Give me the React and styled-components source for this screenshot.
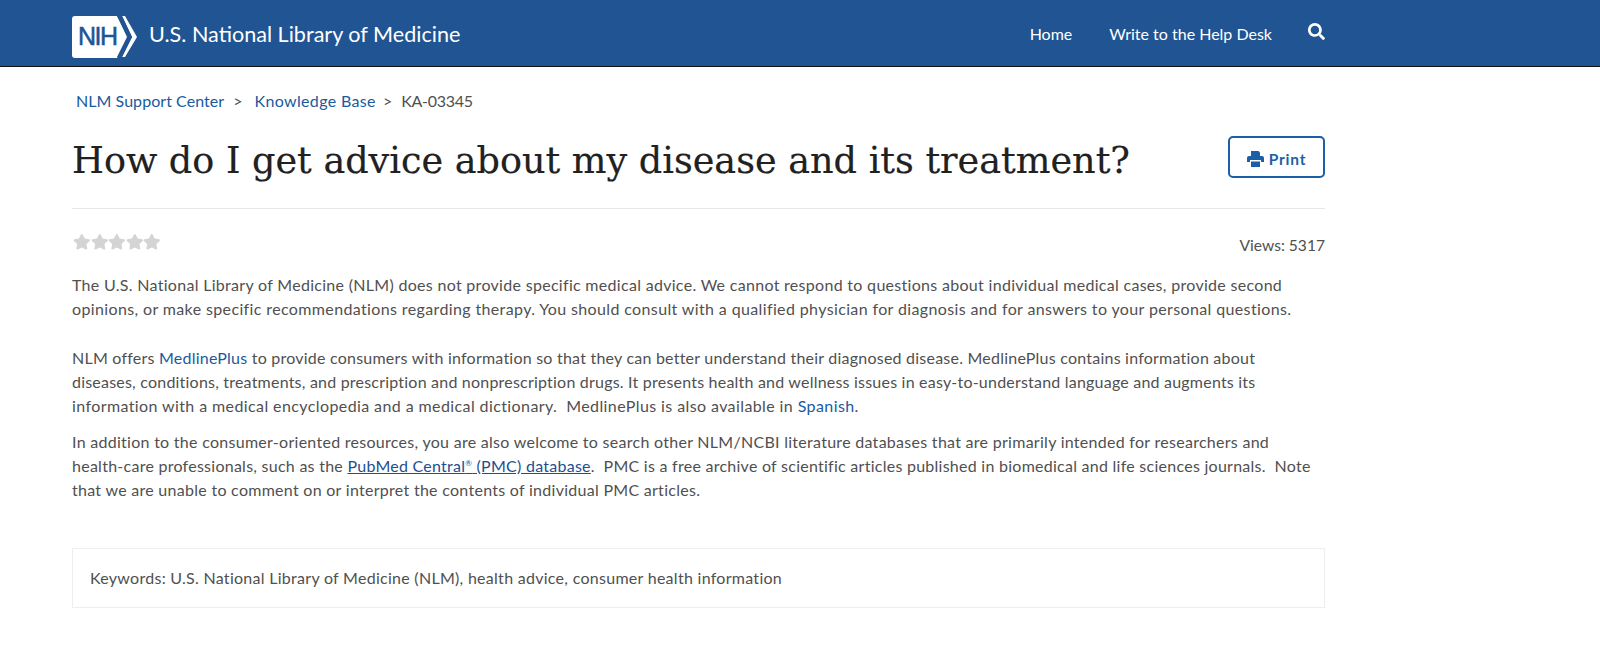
import React from "react";
import styled, { createGlobalStyle } from "styled-components";
import { FaSearch, FaStar } from "react-icons/fa";

const GlobalStyle = createGlobalStyle`
  body {
    margin: 0;
    background: #fff;
    font-family: "Lato", "Open Sans", sans-serif;
    color: #505050;
  }
`;

const NihLogo = () => (
  <svg width="66" height="42" viewBox="0 0 66 42">
    <path d="M3 0H45L57 21L45 42H3Q0 42 0 39V3Q0 0 3 0Z" fill="#fff" />
    <path d="M50 0H53L65 21L53 41H50L60 21Z" fill="#fff" />
    <path d="M45 0H50L60 21L50 41H45L55 21Z" fill="#205493" />
    <text x="6" y="29" fontFamily="Liberation Sans" fontSize="25" fill="#205493" stroke="#205493" strokeWidth="0.5" textLength="40">
      NIH
    </text>
  </svg>
);

const PrinterIcon = () => (
  <svg width="17" height="17" viewBox="0 0 17 17" fill="currentColor">
    <path d="M4 1H11.5L13 2.5V6.5H4Z" />
    <path d="M2 6H15Q17 6 17 8V12H14V10H3V12H0V8Q0 6 2 6Z" />
    <path d="M4 11.5H13V17H4Z" />
  </svg>
);

export default function App() {
  return (
    <>
      <GlobalStyle />
      <Header>
        <HeaderInner>
          <Brand>
            <LogoSlot>
              <NihLogo />
            </LogoSlot>
            <BrandName>U.S. National Library of Medicine</BrandName>
          </Brand>
          <Nav>
            <NavLink>Home</NavLink>
            <NavLink>Write to the Help Desk</NavLink>
            <SearchIcon />
          </Nav>
        </HeaderInner>
      </Header>
      <Main>
        <Crumbs>
          <Link>NLM Support Center</Link>
          <Sep>&gt;</Sep>
          <Line $track={0.35}>
            <Link>Knowledge Base</Link>
          </Line>
          <Sep $tight>&gt;</Sep>
          <Line $track={-0.3}>KA-03345</Line>
        </Crumbs>
        <TitleRow>
          <Title>How do I get advice about my disease and its treatment?</Title>
          <PrintButton>
            <PrinterIcon />
            <PrintLabel>Print</PrintLabel>
          </PrintButton>
        </TitleRow>
        <MetaRow>
          <Stars>
            {[0, 1, 2, 3, 4].map((i) => (
              <FaStar key={i} size={17.6} />
            ))}
          </Stars>
          <Views>Views: 5317</Views>
        </MetaRow>
        <Para $gap={25}>
          <Line $track={0.3}>The U.S. National Library of Medicine (NLM) does not provide specific medical advice. We cannot respond to questions about individual medical cases, provide second</Line>
          <Line $track={0.37}>opinions, or make specific recommendations regarding therapy. You should consult with a qualified physician for diagnosis and for answers to your personal questions.</Line>
        </Para>
        <Para $gap={12}>
          <Line $track={0.225}>NLM offers <Link>MedlinePlus</Link> to provide consumers with information so that they can better understand their diagnosed disease. MedlinePlus contains information about</Line>
          <Line $track={0.21}>diseases, conditions, treatments, and prescription and nonprescription drugs. It presents health and wellness issues in easy-to-understand language and augments its</Line>
          <Line $track={0.4}>information with a medical encyclopedia and a medical dictionary. &nbsp;MedlinePlus is also available in <Link>Spanish</Link>.</Line>
        </Para>
        <Para $gap={46}>
          <Line $track={0.28}>In addition to the consumer-oriented resources, you are also welcome to search other NLM/NCBI literature databases that are primarily intended for researchers and</Line>
          <Line $track={0.26}>health-care professionals, such as the <Underlined>PubMed Central<Reg>®</Reg> (PMC) database</Underlined>. &nbsp;PMC is a free archive of scientific articles published in biomedical and life sciences journals. &nbsp;Note</Line>
          <Line $track={0.28}>that we are unable to comment on or interpret the contents of individual PMC articles.</Line>
        </Para>
        <Keywords>Keywords: U.S. National Library of Medicine (NLM), health advice, consumer health information</Keywords>
      </Main>
    </>
  );
}

const Header = styled.header`
  height: 66px;
  background: #205493;
  border-bottom: 1px solid #111;
`;

const HeaderInner = styled.div`
  width: 1254px;
  height: 100%;
  margin-left: 72px;
  display: flex;
  align-items: center;
  justify-content: space-between;
`;

const Brand = styled.div`
  display: flex;
  align-items: center;
  gap: 11px;
`;

const LogoSlot = styled.div`
  display: flex;
  margin-top: 8px;
`;

const BrandName = styled.span`
  color: #fff;
  font-size: 21.6px;
  font-weight: 400;
  padding-top: 2px;
`;

const Nav = styled.nav`
  display: flex;
  align-items: center;
  gap: 37px;
  color: #fff;
`;

const NavLink = styled.span`
  font-size: 16px;
  font-weight: 400;
`;

const SearchIcon = styled(FaSearch)`
  width: 17px;
  height: 17px;
  margin: -4px 1px 0 -1px;
`;

const Main = styled.main`
  width: 1253px;
  margin-left: 72px;
  font-size: 16px;
  line-height: 24px;
  letter-spacing: 0.28px;
`;

const Line = styled.span`
  display: block;
  white-space: nowrap;
  letter-spacing: ${(p) => p.$track}px;
`;

const Crumbs = styled.div`
  display: flex;
  padding: 22px 0 0 4px;
  letter-spacing: 0.05px;
`;

const Sep = styled.span`
  margin: ${(p) => (p.$tight ? "0 9px 0 7px" : "0 12px 0 9px")};
`;

const Link = styled.a`
  color: #1a5a9e;
`;

const Underlined = styled(Link)`
  color: #1d4f91;
  text-decoration: underline;
`;

const Reg = styled.sup`
  font-size: 8px;
  line-height: 0;
`;

const TitleRow = styled.div`
  display: flex;
  align-items: center;
  justify-content: space-between;
  padding: 20px 0 19px;
  border-bottom: 1px solid #e6e6e6;
`;

const Title = styled.h1`
  margin: 0;
  font-family: "DejaVu Serif", "Liberation Serif", serif;
  font-size: 36.6px;
  line-height: 56px;
  font-weight: 400;
  letter-spacing: 0;
  color: #212121;
  -webkit-text-stroke: 0.2px #212121;
`;

const PrintButton = styled.button`
  width: 97px;
  height: 42px;
  margin-bottom: 8px;
  display: flex;
  align-items: center;
  justify-content: center;
  gap: 5px;
  padding: 3px 0 0;
  background: #fff;
  border: 2px solid #1a5fa8;
  border-radius: 5px;
  color: #1a5fa8;
  font-family: inherit;
  font-size: 16px;
  font-weight: 700;
  letter-spacing: 0.8px;
`;

const PrintLabel = styled.span`
  font-size: 15.5px;
`;

const MetaRow = styled.div`
  display: flex;
  justify-content: space-between;
  padding-top: 24px;
  height: 40px;
`;

const Stars = styled.div`
  display: flex;
  height: 24px;
  margin-left: 1px;
  align-items: flex-start;
  color: #d4d4d4;
`;

const Views = styled.span`
  font-size: 15.6px;
  letter-spacing: 0;
`;

const Para = styled.p`
  margin: 0 0 ${(p) => p.$gap}px;
`;

const Keywords = styled.div`
  height: 60px;
  box-sizing: border-box;
  padding: 17px;
  border: 1px solid #eee;
  box-shadow: 0 1px 1px rgba(0, 0, 0, 0.04);
`;
